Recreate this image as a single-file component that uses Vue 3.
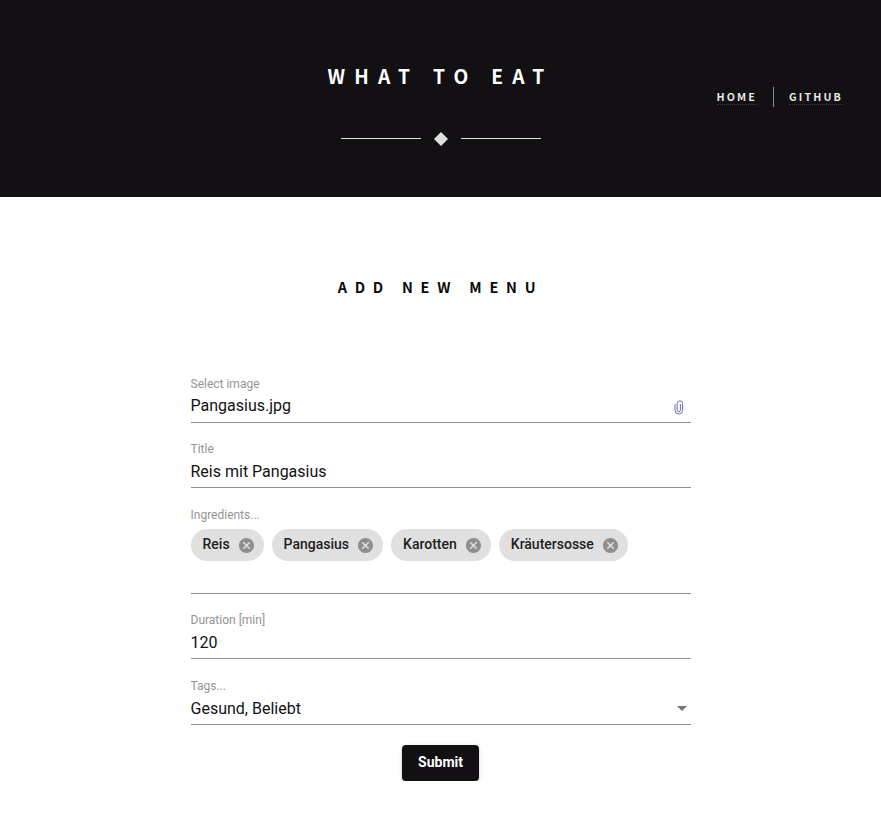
<script setup>
import { ref } from 'vue'

const links = ['Home', 'GitHub']
const ingredients = ref(['Reis', 'Pangasius', 'Karotten', 'Kräutersosse'])
const remove = (i) => ingredients.value.splice(i, 1)
</script>

<template>
  <header class="header">
    <div class="brand">
      <h1 class="logo">What to eat</h1>
      <div class="divider">
        <span class="rule"></span>
        <svg class="diamond" viewBox="0 0 14 14"><path d="M7 0l7 7-7 7-7-7z" /></svg>
        <span class="rule"></span>
      </div>
    </div>
    <nav class="nav">
      <div v-for="link in links" :key="link" class="nav-item">
        <a class="nav-link">{{ link }}</a>
      </div>
    </nav>
  </header>

  <main class="main">
    <h2 class="title">Add new menu</h2>
    <form class="form" @submit.prevent>
      <div class="field">
        <span class="label">Select image</span>
        <div class="value value-file">
          <span>Pangasius.jpg</span>
          <svg class="clip" viewBox="0 0 10 15">
            <path d="M1 4v6.2a3.8 3.8 0 0 0 7.6 0V3.6a2.7 2.7 0 0 0-5.4 0v6.5a1.6 1.6 0 0 0 3.2 0V4" />
          </svg>
        </div>
      </div>
      <div class="field">
        <span class="label">Title</span>
        <div class="value"><span>Reis mit Pangasius</span></div>
      </div>
      <div class="field field-chips">
        <span class="label">Ingredients...</span>
        <div class="chips">
          <div v-for="(item, i) in ingredients" :key="item" class="chip">
            <span class="chip-text">{{ item }}</span>
            <svg class="cancel" viewBox="2 2 20 20" @click="remove(i)">
              <path d="M12 2C6.47 2 2 6.47 2 12s4.47 10 10 10 10-4.47 10-10S17.53 2 12 2zm5 13.59L15.59 17 12 13.41 8.41 17 7 15.59 10.59 12 7 8.41 8.41 7 12 10.59 15.59 7 17 8.41 13.41 12 17 15.59z" />
            </svg>
          </div>
        </div>
      </div>
      <div class="field">
        <span class="label">Duration [min]</span>
        <div class="value"><span>120</span></div>
      </div>
      <div class="field field-tags">
        <span class="label">Tags...</span>
        <div class="value">
          <span>Gesund, Beliebt</span>
          <svg class="arrow" viewBox="0 0 10 5"><path d="M0 0h10L5 5z" /></svg>
        </div>
      </div>
      <button class="submit" type="submit">Submit</button>
    </form>
  </main>
</template>

<style>
body {
  background: #fff;
}
</style>

<style scoped>
.header {
  position: relative;
  box-sizing: border-box;
  height: 197px;
  background: #121013;
  font-family: "Noto Sans CJK JP", "Noto Sans", sans-serif;
}
.brand {
  display: flex;
  flex-direction: column;
  align-items: center;
  padding-top: 61px;
}
.logo {
  margin: 0;
  color: #fff;
  font-size: 19.2px;
  font-weight: 700;
  line-height: 30px;
  letter-spacing: 9.25px;
  text-transform: uppercase;
  white-space: nowrap;
}
.divider {
  display: flex;
  align-items: center;
  justify-content: space-between;
  width: 200px;
  height: 14px;
  margin-top: 41px;
}
.rule {
  width: 80px;
  height: 1px;
  margin-bottom: 1px;
  background: #dde1de;
}
.diamond {
  width: 14px;
  height: 14px;
  fill: #dde1de;
}
.nav {
  position: absolute;
  top: 87px;
  right: 38px;
  display: flex;
}
.nav-item {
  display: flex;
  height: 20px;
}
.nav-item + .nav-item {
  margin-left: 16px;
  padding-left: 15px;
  border-left: 1px solid #8d8c8e;
}
.nav-link {
  height: 17px;
  border-bottom: 1px dotted #3c3a3d;
  color: #e6e6e6;
  font-size: 10.7px;
  font-weight: 700;
  line-height: 19px;
  letter-spacing: 2.12px;
  text-transform: uppercase;
}
.main {
  display: flex;
  flex-direction: column;
  align-items: center;
  padding-top: 75px;
}
.title {
  margin: 0;
  color: #0a0a0c;
  font-family: "Noto Sans CJK JP", "Noto Sans", sans-serif;
  font-size: 14.5px;
  font-weight: 700;
  line-height: 30px;
  letter-spacing: 7.75px;
  text-transform: uppercase;
  white-space: nowrap;
}
.form {
  display: flex;
  flex-direction: column;
  width: 500px;
  margin-top: 74px;
  font-family: Roboto, sans-serif;
}
.field {
  display: flex;
  flex-direction: column;
  height: 46px;
  margin-bottom: 18px;
  border-bottom: 1px solid #8f8f8f;
}
.field-chips {
  height: 86px;
  margin-top: 1px;
}
.field-tags {
  margin-top: 1px;
  margin-bottom: 20px;
}
.label {
  color: #949494;
  font-size: 12px;
  line-height: 16px;
}
.value {
  display: flex;
  justify-content: space-between;
  align-items: center;
  margin-top: 3px;
  color: #131114;
  font-size: 16px;
  line-height: 24px;
}
.value-file {
  margin-top: 2px;
}
.clip {
  width: 10px;
  height: 15px;
  margin-top: 2px;
  margin-right: 7px;
  fill: none;
  stroke: #6570a8;
  stroke-width: 1;
}
.arrow {
  width: 10px;
  height: 5px;
  margin-right: 4px;
  margin-bottom: 1px;
  fill: #757575;
}
.chips {
  display: flex;
  gap: 8px;
  margin-top: 6px;
}
.chip {
  display: flex;
  align-items: center;
  box-sizing: border-box;
  height: 32px;
  padding: 0 10px 0 12px;
  border-radius: 16px;
  background: #e0e0e0;
  color: #212121;
  font-size: 14px;
  font-weight: 500;
  line-height: 20px;
}
.chip-text {
  padding-bottom: 2px;
}
.cancel {
  width: 15px;
  height: 15px;
  margin-left: 9px;
  fill: #8e8e8e;
  cursor: pointer;
}
.submit {
  align-self: center;
  width: 77px;
  height: 36px;
  padding: 0 0 2px;
  border: 0;
  border-radius: 4px;
  background: #121013;
  box-shadow: 0 3px 1px -2px rgba(0, 0, 0, .2), 0 2px 2px 0 rgba(0, 0, 0, .14), 0 1px 5px 0 rgba(0, 0, 0, .12);
  color: #fff;
  font-family: Roboto, sans-serif;
  font-size: 14px;
  font-weight: 700;
}
</style>
